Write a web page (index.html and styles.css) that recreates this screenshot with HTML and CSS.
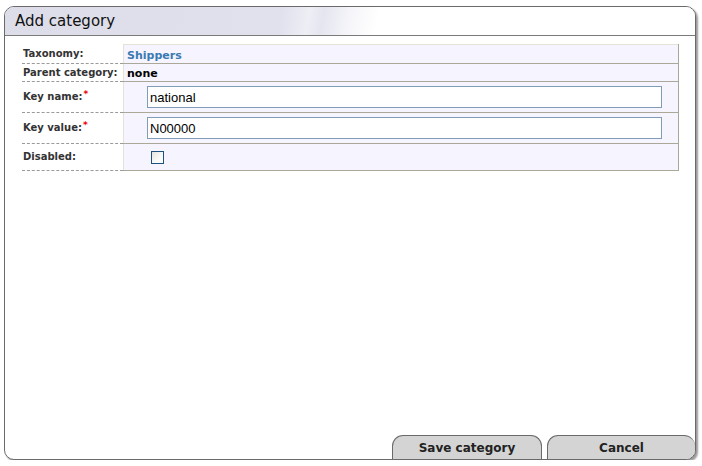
FILE: index.html
```html
<!DOCTYPE html>
<html lang="en">
<head>
    <meta charset="UTF-8">
    <title>Add category</title>
    <link rel="stylesheet" href="styles.css">
</head>
<body>
    <div class="window">
        <div class="window-title">Add category</div>
        <div class="window-body">
            <table class="form-table">
                <tr class="first-row">
                    <td class="label">Taxonomy:</td>
                    <td class="value"><span class="taxonomy">Shippers</span></td>
                </tr>
                <tr class="second-row">
                    <td class="label">Parent category:</td>
                    <td class="value"><span class="parent">none</span></td>
                </tr>
                <tr class="input-row">
                    <td class="label">Key name:<span class="req">*</span></td>
                    <td class="value field"><input type="text" class="text-input" value="national"></td>
                </tr>
                <tr class="input-row">
                    <td class="label">Key value:<span class="req">*</span></td>
                    <td class="value field"><input type="text" class="text-input" value="N00000"></td>
                </tr>
                <tr class="check-row">
                    <td class="label">Disabled:</td>
                    <td class="value field"><span class="checkbox"></span></td>
                </tr>
            </table>
        </div>
        <div class="window-footer">
            <button class="tab-btn">Save category</button>
            <button class="tab-btn last">Cancel</button>
        </div>
    </div>
</body>
</html>
```

FILE: styles.css
```css
body {
    margin: 0;
    padding: 6px 0 0 4px;
    background: #fff;
    font-family: "DejaVu Sans", Verdana, sans-serif;
}
.window {
    width: 690px;
    height: 452px;
    border: 1px solid #6a6a6a;
    border-radius: 10px;
    box-shadow: 2px 2px 2px #9a9a9a;
    overflow: hidden;
    display: flex;
    flex-direction: column;
    background: #fff;
}
.window-title {
    height: 28px;
    line-height: 29px;
    padding-left: 10px;
    font-size: 15px;
    color: #111;
    border-bottom: 1px solid #7a7a7a;
    background: linear-gradient(100deg, #dcdde9 0%, #e0e1ed 40%, #eeeef5 44%, #e4e5ef 46%, #f6f6fa 50%, #fff 54%);
}
.window-body {
    flex: 1;
    padding: 8px 16px 0 17px;
}
.form-table {
    width: 657px;
    border-collapse: collapse;
}
.label {
    width: 100px;
    padding: 0 0 0 1px;
    font-size: 10px;
    line-height: 12px;
    font-weight: bold;
    color: #333;
    white-space: nowrap;
    border-bottom: 1px dashed #9a9a9a;
    vertical-align: middle;
}
.value {
    padding: 0 0 0 3px;
    line-height: 13px;
    background: #f6f4fe;
    border-left: 1px solid #e6e2d6;
    border-right: 1px solid #aca899;
    border-bottom: 1px solid #aca899;
    vertical-align: middle;
}
.first-row .value {
    height: 18px;
    border-top: 1px solid #e6e2d6;
}
.second-row .value {
    height: 17px;
}
.taxonomy {
    font-size: 11px;
    font-weight: bold;
    color: #3a7ab3;
}
.parent {
    font-size: 11px;
    font-weight: bold;
    color: #000;
}
.req {
    color: #e00;
    font-size: 9px;
    vertical-align: top;
    position: relative;
    top: -3px;
    margin-left: 1px;
}
.input-row .value {
    height: 30px;
}
.check-row .value {
    height: 26px;
}
.field {
    padding-left: 23px;
}
.text-input {
    display: block;
    box-sizing: border-box;
    width: 515px;
    height: 22px;
    margin: 0;
    padding: 1px 2px;
    border: 1px solid #7f9db9;
    font-family: "Liberation Sans", Arial, sans-serif;
    font-size: 13px;
    color: #000;
    background: #fff;
}
.checkbox {
    display: block;
    box-sizing: border-box;
    width: 13px;
    height: 13px;
    margin-left: 4px;
    border: 1px solid #1c5180;
    background: linear-gradient(135deg, #e4e4de 0%, #f8f8f6 55%, #fff 100%);
}
.window-footer {
    display: flex;
    justify-content: flex-end;
    gap: 5px;
    height: 24px;
}
.tab-btn {
    width: 150px;
    height: 24px;
    margin: 0;
    padding: 0;
    border: 1px solid #6a6a6a;
    border-bottom: none;
    border-radius: 11px 11px 0 0;
    background: #d4d4d4;
    font-family: "DejaVu Sans", Verdana, sans-serif;
    font-size: 12px;
    font-weight: bold;
    color: #222;
}
.tab-btn.last {
    width: 148px;
    border-right: none;
}
```
